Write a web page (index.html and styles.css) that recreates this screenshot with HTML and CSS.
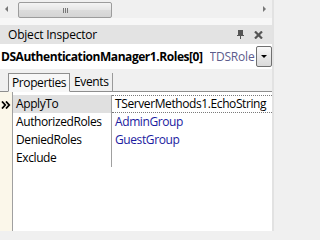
FILE: index.html
```html
<!DOCTYPE html>
<html>
<head>
<meta charset="utf-8">
<link rel="stylesheet" href="styles.css">
</head>
<body>
<div class="screen">
  <div class="panel">
    <div class="hscroll">
      <span class="arrow-left"></span>
      <div class="thumb"><span class="grip"></span></div>
      <div class="track-fill"></div>
      <span class="arrow-right"></span>
    </div>
    <div class="spacer"></div>
    <div class="caption">
      <span class="caption-text">Object Inspector</span>
      <span class="caption-icons">
        <svg class="pin" width="7" height="9" viewBox="0 0 7 9"><rect x="1" y="0" width="5" height="5" fill="#555"/><rect x="0" y="5" width="7" height="1" fill="#555"/><rect x="3" y="6" width="1" height="3" fill="#555"/></svg>
        <svg class="close" width="9" height="8" viewBox="0 0 9 8"><path d="M1 0.5 L8 7.5 M8 0.5 L1 7.5" stroke="#555" stroke-width="2.2"/></svg>
      </span>
    </div>
    <div class="selector">
      <span class="obj-name">DSAuthenticationManager1.Roles[0]</span>
      <span class="obj-type">TDSRole</span>
      <span class="drop-btn"><span class="tri"></span></span>
    </div>
    <div class="tabs">
      <span class="tab-lead"></span>
      <span class="tab active">Properties</span>
      <span class="tab">Events</span>
      <span class="tab-rest"></span>
    </div>
    <div class="grid">
      <div class="gutter">
        <svg class="marker" width="10" height="8" viewBox="0 0 10 8"><path d="M1 0.5 L4.2 4 L1 7.5 M5 0.5 L8.2 4 L5 7.5" fill="none" stroke="#000" stroke-width="1.8"/></svg>
      </div>
      <div class="rows">
        <div class="row selected">
          <span class="name">ApplyTo</span>
          <span class="value focus">TServerMethods1.EchoString</span>
        </div>
        <div class="row">
          <span class="name">AuthorizedRoles</span>
          <span class="value mod">AdminGroup</span>
        </div>
        <div class="row">
          <span class="name">DeniedRoles</span>
          <span class="value mod">GuestGroup</span>
        </div>
        <div class="row">
          <span class="name">Exclude</span>
          <span class="value"></span>
        </div>
      </div>
    </div>
  </div>
  <div class="strip"></div>
</div>
</body>
</html>
```
FILE: styles.css
```css
html, body {
  margin: 0;
  padding: 0;
  background: #f0f0f0;
}
.screen {
  width: 282px;
  height: 231px;
  display: flex;
  overflow: hidden;
  font-family: "Open Sans", "Noto Sans", sans-serif;
  font-size: 12px;
  letter-spacing: -0.4px;
  color: #000;
}
.panel {
  width: 272px;
  display: flex;
  flex-direction: column;
  background: #fff;
}
.strip {
  flex: 1;
  background: #f0f0f0;
  border-left: 2px solid #e2e2e2;
}
.hscroll {
  height: 18px;
  background: #f0f0f0;
  display: flex;
  align-items: center;
  box-sizing: border-box;
  padding-top: 2px;
}
.arrow-left {
  width: 0;
  height: 0;
  border-top: 3px solid transparent;
  border-bottom: 3px solid transparent;
  border-right: 3px solid #777;
  margin: 0 10px 0 5px;
  position: relative;
  top: -1px;
}
.thumb {
  width: 94px;
  height: 16px;
  box-sizing: border-box;
  border: 1px solid #9c9c9c;
  border-radius: 2px;
  background: linear-gradient(#f4f4f4, #e6e6e6 50%, #dcdcdc 51%, #d4d4d4);
  display: flex;
  align-items: center;
  justify-content: center;
}
.grip {
  width: 5px;
  height: 5px;
  background: linear-gradient(90deg, #777 0 1px, transparent 1px 2px, #777 2px 3px, transparent 3px 4px, #777 4px 5px);
}
.track-fill {
  flex: 1;
}
.arrow-right {
  width: 0;
  height: 0;
  border-top: 3px solid transparent;
  border-bottom: 3px solid transparent;
  border-left: 3px solid #777;
  margin: 0 6px 0 4px;
  position: relative;
  top: -1px;
}
.spacer {
  height: 7px;
  background: #f7f7f7;
}
.caption {
  height: 19px;
  background: #e3e3e3;
  display: flex;
  align-items: center;
  justify-content: space-between;
  padding: 0 9px 0 8px;
}
.caption-text {
  letter-spacing: -0.2px;
}
.caption-icons {
  display: flex;
  align-items: center;
  gap: 10px;
}
.selector {
  height: 25px;
  background: #fff;
  display: flex;
  align-items: center;
  padding-left: 1px;
  white-space: nowrap;
  overflow: hidden;
}
.obj-name {
  font-weight: bold;
  letter-spacing: -0.45px;
}
.obj-type {
  color: #5c5c8c;
  margin-left: 7px;
  width: 45px;
  overflow: hidden;
  letter-spacing: -0.2px;
}
.drop-btn {
  width: 16px;
  height: 21px;
  box-sizing: border-box;
  border: 1px solid #707070;
  border-radius: 2px;
  background: linear-gradient(#fafafa, #e8e8e8 50%, #dadada);
  display: flex;
  align-items: center;
  justify-content: center;
  margin-left: auto;
}
.tri {
  width: 0;
  height: 0;
  border-left: 3px solid transparent;
  border-right: 3px solid transparent;
  border-top: 3px solid #000;
}
.tabs {
  height: 23px;
  background: #f0f0f0;
  display: flex;
  align-items: flex-end;
}
.tab-lead {
  width: 8px;
  height: 0;
  border-bottom: 1px solid #8e8e8e;
}
.tab {
  height: 19px;
  line-height: 18px;
  box-sizing: border-box;
  border-bottom: 1px solid #8e8e8e;
}
.tab.active {
  background: #f7f7f7;
  border: 1px solid #8e8e8e;
  border-bottom: 1px solid #f7f7f7;
  padding: 0 3px 0 3px;
}
.tab:not(.active) {
  border-right: 1px solid #9a9a9a;
  padding: 0 4px 0 4px;
}
.tab-rest {
  flex: 1;
  border-bottom: 1px solid #8e8e8e;
}
.grid {
  flex: 1;
  display: flex;
  background: #fff;
  padding-top: 3px;
}
.gutter {
  width: 12px;
  background: #fbf7ea;
  border-right: 1px solid #a0a0a0;
  margin-top: -3px;
}
.marker {
  display: block;
  margin: 9px 0 0 1px;
}
.rows {
  flex: 1;
  display: flex;
  flex-direction: column;
}
.row {
  height: 18px;
  display: flex;
}
.name {
  width: 95px;
  padding-left: 3px;
  line-height: 18px;
  border-right: 1px solid #a0a0a0;
  white-space: nowrap;
}
.row.selected .name {
  background: #e0e0e0;
}
.value {
  flex: 1;
  padding-left: 3px;
  line-height: 16px;
  white-space: nowrap;
  border-top: 1px dotted transparent;
  border-bottom: 1px dotted transparent;
}
.value.focus {
  border-top: 1px dotted #7a7a7a;
  border-bottom: 1px dotted #7a7a7a;
}
.value.mod {
  color: #1a1aa0;
}
```
